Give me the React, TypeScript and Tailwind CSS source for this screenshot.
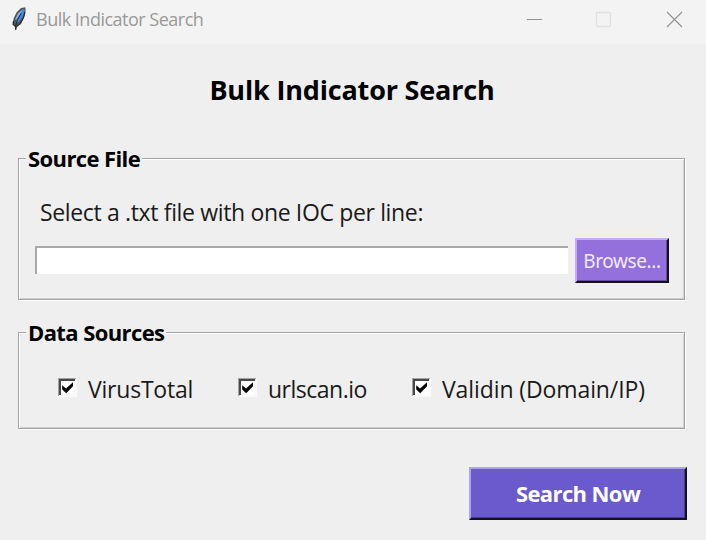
import type { ReactNode } from 'react';

function Feather() {
  return (
    <svg width="14" height="24" viewBox="0 0 14 24" className="block">
      <path d="M13.4 0.3 L9 1 L4.5 5.5 L1.6 11.5 L0.6 17.5 L2.8 19.5 L3.4 23.4 L5.2 19.8 L9 17 L12.2 10.5 L13.6 4 Z" fill="#50555c" />
      <path d="M12.3 1.4 L8.5 4 L5 9.5 L3.6 16 L6.8 15 L10.8 9.5 L12.6 4 Z" fill="#4688d8" />
      <path d="M10.6 2.2 L5.8 6.8 L3 12.5 L4.6 12.2 L8 7.5 Z" fill="#86b4e4" />
      <path d="M9 6.5 L5.6 12.5 L3.8 18 L3.8 23" fill="none" stroke="#202020" strokeWidth="1" />
      <path d="M13 5 L11.5 10.5 L8.6 16 L5 19.3 M1.3 14 L1.2 17.5 L3 19.5" fill="none" stroke="#202020" strokeWidth="1" />
    </svg>
  );
}

function Group({ title, titleClass, className, children }: { title: string; titleClass: string; className: string; children: ReactNode }) {
  return (
    <fieldset className={`ml-[18px] w-[667px] min-w-0 border border-[#a4a4a4] shadow-[1px_1px_0_#fff,inset_1px_1px_0_#fff,inset_-1px_-1px_0_#cecece] ${className}`}>
      <legend className="ml-[7px] h-[26px] bg-[#efefef] px-[2px] text-[22px] leading-[26px] font-bold whitespace-nowrap text-black">
        <span className={titleClass}>{title}</span>
      </legend>
      {children}
    </fieldset>
  );
}

function Check({ label, className }: { label: string; className: string }) {
  return (
    <label className="flex items-start whitespace-nowrap text-[#1a1a1a]">
      <svg width="19" height="19" viewBox="0 0 19 19" className="mt-[5px] mr-[11px] block shrink-0">
        <path d="M0 0H19V19H0Z" fill="#fafafa" />
        <path d="M0 0H18V1.2H1.2V18H0Z" fill="#a2a2a2" />
        <path d="M1 1H17V3H3V17H1Z" fill="#484848" />
        <path d="M3 3H16.5V16.5H3Z" fill="#fff" />
        <path d="M4.2 7.2L8 10.6L15 4.2V8.3L8.2 15.2L4.2 11.5Z" fill="#000" />
      </svg>
      <span className={className}>{label}</span>
    </label>
  );
}

export default function App() {
  return (
    <main className="flex h-[540px] w-[706px] flex-col overflow-hidden bg-[#efefef] font-['Open_Sans','Noto_Sans',sans-serif] text-[23px] leading-[32px]">
      <header className="flex h-[44px] shrink-0 items-start bg-[#f3f3f3] text-[#999]">
        <div className="mt-[7px] ml-[12px]"><Feather /></div>
        <span className="mt-[6px] ml-[10px] w-[170px] text-[18px] leading-[26px] tracking-[-0.5px] whitespace-nowrap">Bulk Indicator Search</span>
        <svg width="160" height="20" viewBox="0 0 160 20" className="mt-[10px] ml-[320px] shrink-0" fill="none">
          <path d="M1 9.5H16" stroke="#929292" />
          <rect x="70.5" y="2.5" width="14" height="14" rx="1" stroke="#e0e0e0" strokeWidth="1.3" />
          <path d="M141 2L156 17M156 2L141 17" stroke="#929292" strokeWidth="1.2" />
        </svg>
      </header>
      <h1 className="mt-[26px] h-[40px] pr-[2px] text-center text-[27px] leading-[40px] font-bold whitespace-nowrap text-black">
        <span className="tracking-[-0.17px]">Bulk Indicator Search</span>
      </h1>
      <Group title="Source File" titleClass="tracking-[-0.6px]" className="mt-[35px] h-[155px]">
        <div className="mt-[25px] ml-[21px] whitespace-nowrap text-[#1a1a1a]"><span className="tracking-[-0.35px]">Select a .txt file with one IOC per line:</span></div>
        <div className="mt-[10px] ml-[16px] flex items-start">
          <div className="mt-[8px] h-[28px] w-[533px] border-t-2 border-l-2 border-[#a9a9a9] bg-white" />
          <button className="ml-[7px] flex h-[45px] w-[94px] items-center justify-center border-2 border-t-[#c5acf6] border-r-[#15101f] border-b-[#15101f] border-l-[#c5acf6] bg-[#9370db] font-['Noto_Sans'] text-[19px] leading-[26px] whitespace-nowrap text-[#f1eafb] shadow-[inset_-1px_-1px_0_#67499e]">
            <span className="tracking-[-0.4px]">Browse...</span>
          </button>
        </div>
      </Group>
      <Group title="Data Sources" titleClass="tracking-[-0.6px]" className="mt-[19px] h-[110px]">
        <div className="mt-[28px] ml-[39px] flex">
          <div className="w-[180px]"><Check label="VirusTotal" className="tracking-[-0.22px]" /></div>
          <div className="w-[174px]"><Check label="urlscan.io" className="tracking-[-0.5px]" /></div>
          <Check label="Validin (Domain/IP)" className="tracking-[-0.1px]" />
        </div>
      </Group>
      <button className="mt-[38px] ml-[469px] flex h-[53px] w-[218px] items-center justify-center border-2 border-t-[#aaa2f3] border-r-[#15101f] border-b-[#15101f] border-l-[#aaa2f3] bg-[#6a5acd] pb-[2px] text-[22px] font-bold whitespace-nowrap text-white shadow-[inset_-1px_-1px_0_#493d93]">
        <span className="tracking-[-0.6px]">Search Now</span>
      </button>
    </main>
  );
}
